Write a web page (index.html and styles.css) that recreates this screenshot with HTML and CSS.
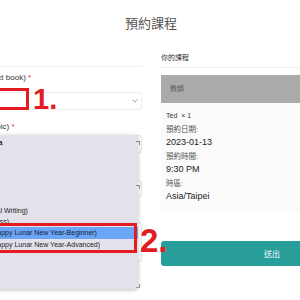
FILE: index.html
```html
<!DOCTYPE html>
<html lang="zh-Hant">
<head>
    <meta charset="UTF-8">
    <meta name="viewport" content="width=device-width, initial-scale=1.0">
    <title>預約課程</title>
    <link rel="stylesheet" href="styles.css">
</head>
<body>
    <div class="page">
        <h1 class="page-title">預約課程</h1>

        <div class="layout">
            <!-- Booking form -->
            <section class="form-col">
                <div class="rule"></div>

                <label class="field-label">請選擇教材 (Text book) <span class="req">*</span></label>
                <div class="select-row">
                    <div class="select-box">
                        <svg class="chevron" width="6" height="4" viewBox="0 0 6 4">
                            <polyline points="0.5,0.5 3,3 5.5,0.5" fill="none" stroke="#888" stroke-width="0.8"/>
                        </svg>
                    </div>
                    <div class="mark mark-1"></div>
                    <span class="mark-num num-1">1.</span>
                </div>

                <label class="field-label label-topic">請選擇主題 (Topic) <span class="req">*</span></label>
                <div class="fields">
                    <div class="box box-a"></div>
                    <div class="box box-b"></div>
                    <div class="box box-c"></div>

                    <ul class="dropdown">
                        <li class="checked">兒童華語班 China</li>
                        <li>商業中文</li>
                        <li>旅遊華語</li>
                        <li>中文寫作</li>
                        <li>台語入門</li>
                        <li>粵語會話</li>
                        <li>寫作課程&nbsp;&nbsp;(Formal Writing)</li>
                        <li>商業中文 (Business)</li>
                        <li class="active">春節特別課程 (Happy Lunar New Year-Beginner)</li>
                        <li>春節特別課程 (Happy Lunar New Year-Advanced)</li>
                    </ul>
                    <span class="grip grip-1"></span>
                    <span class="grip grip-2"></span>
                    <span class="grip grip-3"></span>

                    <div class="mark mark-2"></div>
                    <span class="mark-num num-2">2.</span>
                </div>
            </section>

            <!-- Summary -->
            <aside class="summary-col">
                <p class="summary-title">你的課程</p>
                <div class="rule"></div>
                <div class="teacher-bar">教師</div>
                <div class="details">
                    <div class="student">Ted &nbsp;× 1</div>
                    <div class="detail">
                        <div class="detail-label">預約日期:</div>
                        <div class="detail-value">2023-01-13</div>
                    </div>
                    <div class="detail">
                        <div class="detail-label">預約時間:</div>
                        <div class="detail-value">9:30 PM</div>
                    </div>
                    <div class="detail">
                        <div class="detail-label">時區:</div>
                        <div class="detail-value">Asia/Taipei</div>
                    </div>
                </div>
                <button class="submit">送出</button>
            </aside>
        </div>
    </div>
</body>
</html>
```

FILE: styles.css
```css
/* General */
body {
    margin: 0;
    font-family: "Liberation Sans", "Noto Sans CJK TC", sans-serif;
    background: #fff;
    color: #333;
}

.page {
    width: 300px;
    height: 300px;
    overflow: hidden;
}

.page-title {
    margin: 0;
    padding-top: 16px;
    padding-left: 2px;
    height: 34px;
    box-sizing: border-box;
    text-align: center;
    font-size: 13px;
    line-height: 16px;
    font-weight: normal;
    color: #555;
}

.layout {
    display: flex;
    gap: 19px;
    margin-left: -60px;
    padding-top: 16px;
}

.rule {
    height: 1px;
    background: #f1f1f1;
}

/* Form column */
.form-col {
    width: 202px;
    flex-shrink: 0;
}

.form-col .rule {
    margin-top: 16px;
}

.field-label {
    display: block;
    margin-top: 6px;
    padding-left: 4px;
    font-size: 8px;
    line-height: 10px;
    color: #333;
    white-space: nowrap;
}

.label-topic {
    margin-top: 12px;
    padding-left: 3px;
}

.req {
    color: #e33;
}

.select-row {
    position: relative;
    margin-top: 9px;
}

.select-box {
    height: 18px;
    box-sizing: border-box;
    border: 1px solid #ececec;
    border-radius: 3px;
    display: flex;
    align-items: center;
    justify-content: flex-end;
    padding-right: 3px;
}

.fields {
    position: relative;
    margin-top: 3px;
}

.box {
    border: 1px solid #e6e6e6;
    border-radius: 3px;
    box-sizing: border-box;
}

.box-a { height: 18px; }
.box-b { height: 17px; margin-top: 27px; }
.box-c { height: 40px; margin-top: 25px; }

/* Open list of the topic select */
.dropdown {
    position: absolute;
    top: 0;
    left: 0;
    width: 198px;
    height: 154px;
    margin: 0;
    padding: 2px 0 0;
    list-style: none;
    box-sizing: border-box;
    background: #e3e2eb;
    border-radius: 4px;
    box-shadow: 0 1px 4px rgba(0, 0, 0, 0.25);
}

.dropdown li {
    padding-left: 6px;
    font-size: 7px;
    line-height: 11.3px;
    color: #222;
    white-space: nowrap;
}

.dropdown .checked {
    font-weight: bold;
}

.dropdown .active {
    background: #6aa5f6;
    color: #16213a;
}

.grip {
    position: absolute;
    left: 196px;
    width: 3px;
    height: 3px;
    border-right: 1px solid #888;
    border-top: 1px solid #888;
}

.grip-1 { top: 6px; }
.grip-2 { top: 50px; }
.grip-3 { top: 149px; border-top: none; border-bottom: 1px solid #999; }

/* Red annotations */
.mark {
    position: absolute;
    left: 0;
    border: 3px solid #e31b23;
    box-sizing: border-box;
}

.mark-1 {
    top: -4px;
    width: 89px;
    height: 22px;
}

.mark-2 {
    top: 88px;
    width: 197px;
    height: 30px;
}

.mark-num {
    position: absolute;
    font-family: "Liberation Sans Narrow", "Liberation Sans", sans-serif;
    font-weight: bold;
    color: #e31b23;
    line-height: 1;
}

.num-1 {
    top: -7px;
    left: 93px;
    font-size: 29px;
}

.num-2 {
    top: 89px;
    left: 200px;
    font-size: 33px;
}

/* Summary column */
.summary-col {
    width: 222px;
    flex-shrink: 0;
}

.summary-title {
    margin: 0;
    padding-top: 1px;
    font-size: 7px;
    line-height: 14px;
    color: #333;
}

.summary-col .rule {
    margin-top: 2px;
}

.teacher-bar {
    margin-top: 7px;
    height: 28px;
    padding-left: 9px;
    background: #aaa;
    font-size: 7px;
    line-height: 28px;
    color: #5a5a5a;
}

.details {
    background: #fbfbfb;
    padding: 8px 5px 10px;
}

.student {
    font-size: 7px;
    line-height: 10px;
    color: #333;
}

.detail {
    margin-top: 4px;
}

.detail-label {
    font-size: 7.5px;
    line-height: 10px;
    color: #555;
}

.detail-value {
    margin-top: 1px;
    font-size: 9px;
    line-height: 12px;
    color: #222;
}

.submit {
    display: block;
    width: 100%;
    height: 25px;
    margin-top: 29px;
    border: none;
    border-radius: 3px;
    background: #289e9a;
    color: #fff;
    font-family: inherit;
    font-size: 8px;
}
```
